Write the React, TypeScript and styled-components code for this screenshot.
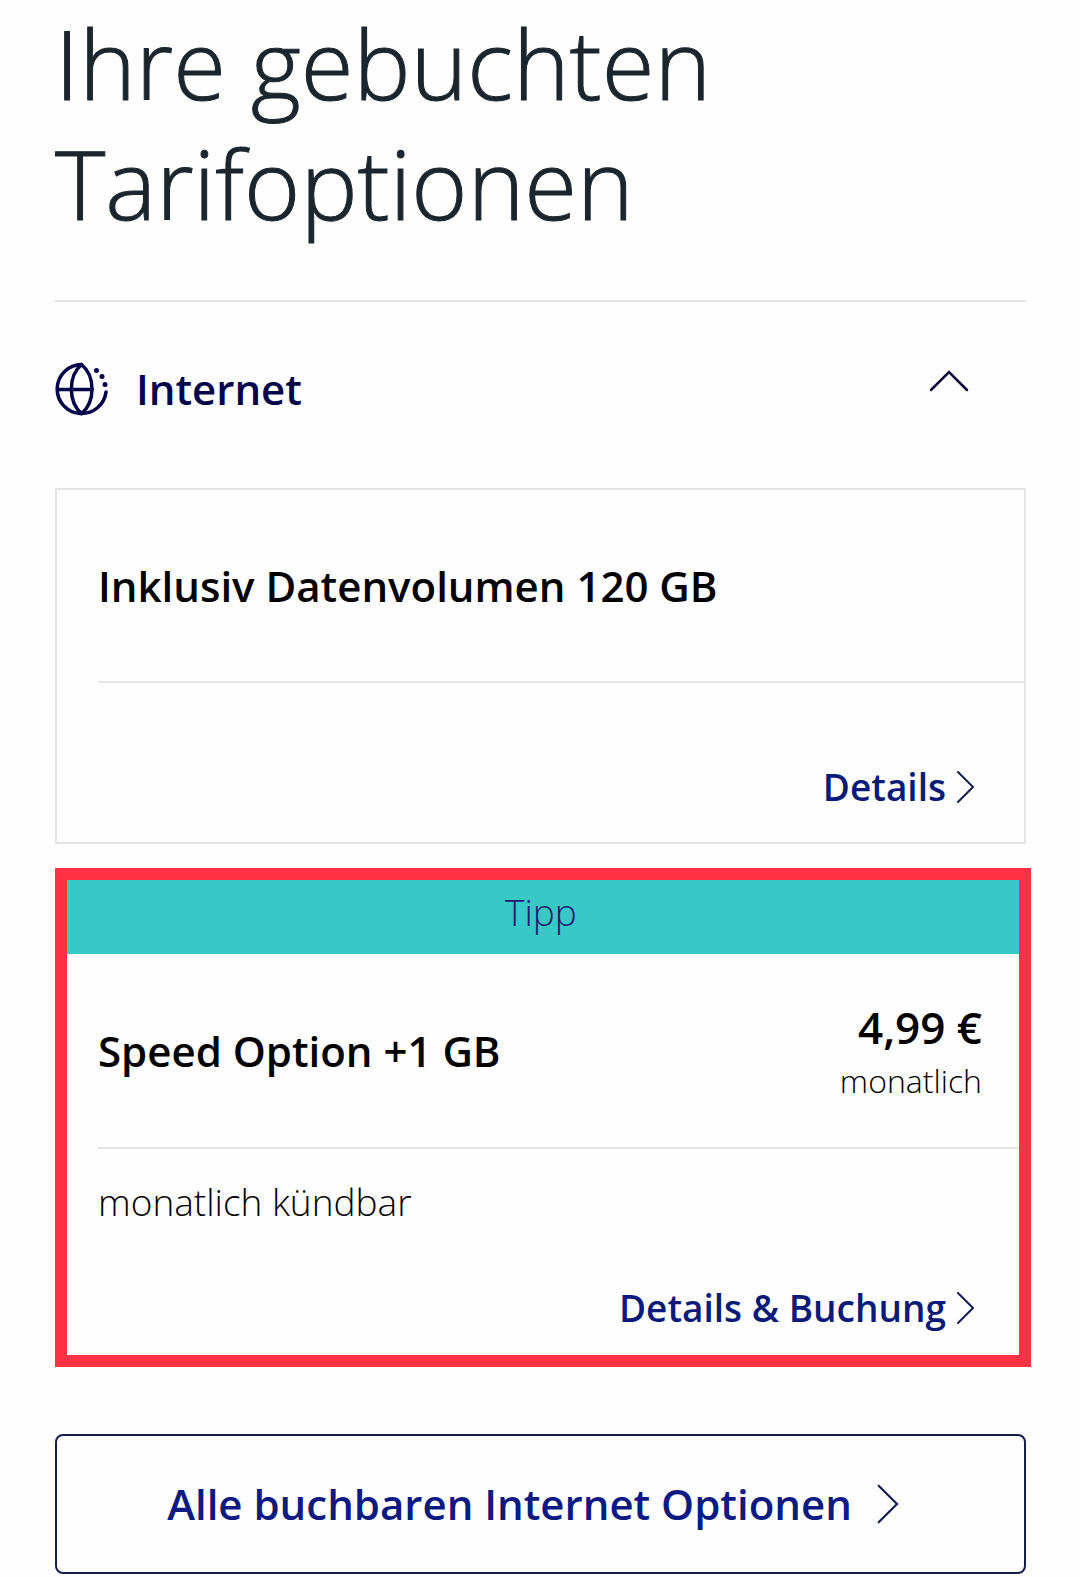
import React, { useState } from "react";
import styled, { createGlobalStyle } from "styled-components";

const GlobalStyle = createGlobalStyle`
  *, *::before, *::after { box-sizing: border-box; }
  body {
    margin: 0;
    background: #fefefe;
    color: #000;
    font-family: "Open Sans", "Noto Sans", sans-serif;
    font-weight: 300;
  }
`;

const Page = styled.main`
  padding: 3px 54px 3px 55px;
`;

const Title = styled.h1`
  margin: 0;
  font-size: 96px;
  line-height: 120px;
  font-weight: 300;
  color: #1b252d;
  -webkit-text-stroke: 1px #1b252d;
`;

const Section = styled.section`
  margin-top: 57px;
  border-top: 2px solid #e4e6e6;
`;

const SectionHeading = styled.h2`
  margin: 0;
`;

const SectionToggle = styled.button`
  display: flex;
  align-items: center;
  gap: 28px;
  width: 100%;
  height: 174px;
  padding: 0 57px 0 0;
  border: 0;
  background: none;
  color: #03034a;
  font: inherit;
  font-size: 42px;
  line-height: 56px;
  font-weight: 600;
  text-align: left;
  cursor: pointer;
`;

const ToggleLabel = styled.span`
  flex: 1;
`;

const Cards = styled.div`
  display: grid;
  gap: 24px;
  margin-top: 12px;
`;

const Card = styled.article<{ $highlighted?: boolean }>`
  border: ${(p) => (p.$highlighted ? "12px solid #ff3145" : "2px solid #e4e6e6")};
  margin-right: ${(p) => (p.$highlighted ? "-5px" : "0")};
  padding-left: ${(p) => (p.$highlighted ? "31px" : "41px")};
`;

const Ribbon = styled.div`
  margin-left: -31px;
  padding: 0 4px 10px 0;
  background: #38c8c6;
  color: #1f1a6b;
  font-size: 37px;
  line-height: 64px;
  text-align: center;
`;

const CardHeader = styled.header<{ $highlighted?: boolean }>`
  display: flex;
  align-items: center;
  justify-content: space-between;
  min-height: ${(p) => (p.$highlighted ? "195px" : "193px")};
  padding-right: 37px;
  border-bottom: 2px solid #e4e6e6;
`;

const CardTitle = styled.h3`
  margin: 0;
  font-size: 42px;
  line-height: 56px;
  font-weight: 600;
`;

const Price = styled.div`
  padding-top: 5px;
  text-align: right;
`;

const Amount = styled.div`
  font-size: 44px;
  line-height: 56px;
  font-weight: 600;
`;

const Interval = styled.div`
  font-size: 32px;
  line-height: 52px;
`;

const CardBody = styled.div<{ $highlighted?: boolean }>`
  display: flex;
  flex-direction: column;
  gap: 50px;
  padding: ${(p) => (p.$highlighted ? "25px 37px 19px 0" : "76px 42px 27px 0")};
`;

const Note = styled.p`
  margin: 0;
  font-size: 37px;
  line-height: 56px;
`;

const DetailsLink = styled.a`
  display: flex;
  align-items: center;
  align-self: flex-end;
  color: #0a1a78;
  font-size: 37px;
  line-height: 56px;
  font-weight: 600;
  text-decoration: none;
`;

const AllOptions = styled.a`
  display: flex;
  align-items: center;
  justify-content: center;
  gap: 12px;
  height: 140px;
  margin-top: 67px;
  padding-right: 6px;
  border: 2px solid #141f4d;
  border-radius: 8px;
  color: #0a1a82;
  font-size: 42px;
  line-height: 56px;
  font-weight: 600;
  text-decoration: none;
`;

const GlobeIcon = () => (
  <svg width="53" height="54" viewBox="0 0 53 54" fill="none" stroke="currentColor" strokeWidth="3.5" strokeLinecap="round" aria-hidden="true">
    <path d="M26.500 2.500A24.500 24.500 0 1 0 51 30" />
    <path d="M26.500 2.500C13 14 13 40 26.500 51.500C40.500 40 40.500 14 26.500 2.500" />
    <path d="M3 27.500H37" />
    <g fill="currentColor" stroke="none">
      <circle cx="41.500" cy="8.500" r="2.500" />
      <circle cx="47" cy="14.500" r="2.500" />
      <circle cx="50" cy="22.500" r="2.500" />
    </g>
  </svg>
);

const Caret = ({ open }: { open: boolean }) => (
  <svg width="40" height="40" viewBox="0 0 40 40" fill="none" stroke="#0d0b3c" strokeWidth="2.500" strokeLinecap="round" aria-hidden="true">
    <path d={open ? "M2 21L20 3L38 21" : "M2 12L20 30L38 12"} />
  </svg>
);

const Chevron = ({ size }: { size: number }) => (
  <svg width={size} height={size} viewBox="0 0 36 36" fill="none" stroke="#141f4d" strokeWidth={size > 40 ? 1.8 : 2} strokeLinecap="round" aria-hidden="true">
    <path d="M12 3L27 18L12 33" />
  </svg>
);

type Option = {
  title: string;
  link: string;
  badge?: string;
  price?: string;
  interval?: string;
  note?: string;
};

const options: Option[] = [
  { title: "Inklusiv Datenvolumen 120 GB", link: "Details" },
  {
    title: "Speed Option +1 GB",
    link: "Details & Buchung",
    badge: "Tipp",
    price: "4,99 €",
    interval: "monatlich",
    note: "monatlich kündbar",
  },
];

const OptionCard = ({ option }: { option: Option }) => {
  const highlighted = Boolean(option.badge);
  return (
    <Card $highlighted={highlighted}>
      {option.badge && <Ribbon>{option.badge}</Ribbon>}
      <CardHeader $highlighted={highlighted}>
        <CardTitle>{option.title}</CardTitle>
        {option.price && (
          <Price>
            <Amount>{option.price}</Amount>
            <Interval>{option.interval}</Interval>
          </Price>
        )}
      </CardHeader>
      <CardBody $highlighted={highlighted}>
        {option.note && <Note>{option.note}</Note>}
        <DetailsLink href="#details">
          {option.link}
          <Chevron size={36} />
        </DetailsLink>
      </CardBody>
    </Card>
  );
};

export default function App() {
  const [open, setOpen] = useState(true);
  return (
    <>
      <GlobalStyle />
      <Page>
        <Title>
          Ihre gebuchten
          <br />
          Tarifoptionen
        </Title>
        <Section>
          <SectionHeading>
            <SectionToggle type="button" aria-expanded={open} onClick={() => setOpen(!open)}>
              <GlobeIcon />
              <ToggleLabel>Internet</ToggleLabel>
              <Caret open={open} />
            </SectionToggle>
          </SectionHeading>
          {open && (
            <Cards>
              {options.map((option) => (
                <OptionCard key={option.title} option={option} />
              ))}
            </Cards>
          )}
        </Section>
        <AllOptions href="#optionen">
          Alle buchbaren Internet Optionen
          <Chevron size={44} />
        </AllOptions>
      </Page>
    </>
  );
}
